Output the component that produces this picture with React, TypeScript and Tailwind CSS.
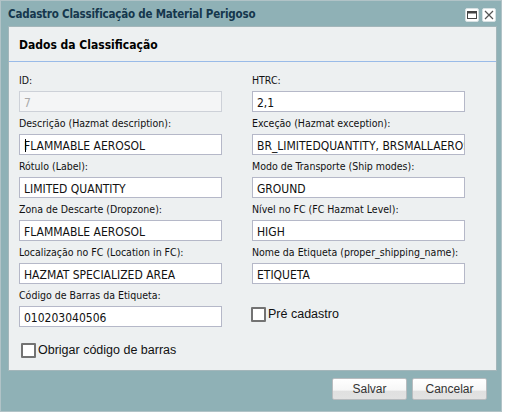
const LBL = "h-[15px] leading-[15px] text-[10.5px] text-[#111] whitespace-nowrap";
const CF = "'DejaVu Sans Condensed', 'DejaVu Sans', sans-serif";

function Field({
  label,
  value,
  wide,
  disabled,
  caret,
}: {
  label: string;
  value: string;
  wide?: boolean;
  disabled?: boolean;
  caret?: boolean;
}) {
  return (
    <div className="flex flex-col pb-[4px]">
      <div className={LBL}>{label}</div>
      <div
        className={
          "relative mt-[3px] h-[21px] overflow-hidden whitespace-nowrap border pl-[4px] pt-[4px] leading-[14px] text-[12px] " +
          (wide ? "w-[213px] " : "w-[203px] ") +
          (disabled
            ? "border-[#cdd1d8] bg-[#f4f5f6] text-[#a9a9a9]"
            : "border-[#b5b8c8] bg-white text-[#111]")
        }
      >
        {value}
        {caret && <span className="absolute left-[5px] top-[4px] h-[13px] w-[1px] bg-black" />}
      </div>
    </div>
  );
}

function Check({ label }: { label: string }) {
  return (
    <div className="flex items-center">
      <div className="h-[15px] w-[15px] rounded-[1px] border-[2px] border-[#737373] bg-white" />
      <span
        className="ml-[2px] text-[12.5px] leading-[15px] text-[#111]"
        style={{ fontFamily: "'Liberation Sans', Arial, sans-serif" }}
      >
        {label}
      </span>
    </div>
  );
}

function Btn({ label }: { label: string }) {
  return (
    <div
      className="flex h-[22px] w-[75px] items-center justify-center rounded-[2px] border border-[#b8bcbf] bg-[linear-gradient(to_bottom,#ffffff_0%,#f7f7f7_55%,#e0e0e0_62%,#e2e2e2_100%)] text-[12px] text-[#333]"
      style={{ fontFamily: "'Liberation Sans', Arial, sans-serif" }}
    >
      {label}
    </div>
  );
}

export default function App() {
  return (
    <div className="h-[414px] w-[506px] bg-white" style={{ fontFamily: CF }}>
      <div className="flex h-[412px] w-[502px] flex-col border border-[#b1c3c7] bg-[#8fb1b6]">
        {/* title bar */}
        <div className="flex h-[25px] items-center pl-[7px] pr-[5px]">
          <div className="flex-1 pt-[2px] text-[11.5px] font-bold tracking-[-0.2px] text-[#15374d] whitespace-nowrap">
            Cadastro Classificação de Material Perigoso
          </div>
          <div className="mt-[2px] flex items-center gap-[3px]">
            <div className="flex h-[14px] w-[14px] items-center justify-center rounded-[2px] border border-[#d7e1e3] bg-white">
              <svg width="10" height="8" viewBox="0 0 10 8">
                <rect x="0.5" y="0.5" width="9" height="7" fill="none" stroke="#444" strokeWidth="1" />
                <rect x="0.5" y="0.5" width="9" height="2" fill="#444" />
              </svg>
            </div>
            <div className="flex h-[14px] w-[14px] items-center justify-center rounded-[2px] border border-[#d7e1e3] bg-white">
              <svg width="10" height="10" viewBox="0 0 10 10">
                <path d="M1 1 L9 9 M9 1 L1 9" stroke="#555" strokeWidth="1.2" />
              </svg>
            </div>
          </div>
        </div>

        {/* panel */}
        <div className="ml-[7px] flex h-[345px] w-[489px] flex-col border border-[#a3b6ba] bg-[#edf0f1]">
          <div className="flex h-[35px] items-center border-b border-[#99bbe8] pl-[10px] pt-[1px] text-[12px] font-bold text-black">
            Dados da Classificação
          </div>
          <div className="pl-[10px] pt-[11px]">
            <div className="grid grid-cols-[203px_213px] gap-x-[30px]">
              <Field label="ID:" value="7" disabled />
              <Field label="HTRC:" value="2,1" wide />
              <Field label="Descrição (Hazmat description):" value="FLAMMABLE AEROSOL" caret />
              <Field label="Exceção (Hazmat exception):" value="BR_LIMITEDQUANTITY, BRSMALLAEROSOL" wide />
              <Field label="Rótulo (Label):" value="LIMITED QUANTITY" />
              <Field label="Modo de Transporte (Ship modes):" value="GROUND" wide />
              <Field label="Zona de Descarte (Dropzone):" value="FLAMMABLE AEROSOL" />
              <Field label="Nível no FC (FC Hazmat Level):" value="HIGH" wide />
              <Field label="Localização no FC (Location in FC):" value="HAZMAT SPECIALIZED AREA" />
              <Field label="Nome da Etiqueta (proper_shipping_name):" value="ETIQUETA" wide />
              <Field label="Código de Barras da Etiqueta:" value="010203040506" />
              <div className="-ml-[1px] pt-[19px]">
                <Check label="Pré cadastro" />
              </div>
            </div>
            <div className="ml-[2px] mt-[12px]">
              <Check label="Obrigar código de barras" />
            </div>
          </div>
        </div>

        {/* footer */}
        <div className="flex justify-end gap-[5px] pr-[14px] pt-[7px]">
          <Btn label="Salvar" />
          <Btn label="Cancelar" />
        </div>
      </div>
    </div>
  );
}
